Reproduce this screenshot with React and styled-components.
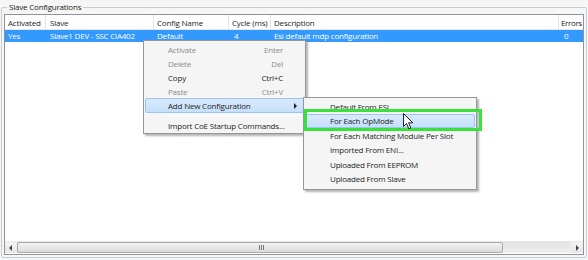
import React from "react";
import styled, { createGlobalStyle } from "styled-components";

const Global = createGlobalStyle`
  html, body { margin: 0; padding: 0; background: #f6f6f6; }
  body { font-family: "Open Sans", "Noto Sans", sans-serif; }
  * { box-sizing: border-box; }
`;

const Page = styled.div`
  position: relative;
  width: 588px;
  height: 260px;
  overflow: hidden;
  padding: 2px 1px 2px 1px;
`;

const Group = styled.fieldset`
  margin: 0;
  height: 256px;
  border: 1px solid #c8cdd2;
  border-radius: 2px;
  padding: 4px 2px 2px 2px;
  display: flex;
  flex-direction: column;
`;

const Legend = styled.legend`
  font-size: 8px;
  letter-spacing: -0.2px;
  color: #222;
  padding: 0 2px;
  margin-left: 3px;
  line-height: 10px;
`;

const ListView = styled.div`
  flex: 1;
  border: 1px solid #8f949b;
  background: #fff;
  display: flex;
  flex-direction: column;
  margin-top: -2px;
`;

const cols = "41px 108px 75px 42px 288px 1fr";

const HeaderRow = styled.div`
  display: grid;
  grid-template-columns: ${cols};
  height: 15px;
  border-bottom: 1px solid #e4e6ea;
`;

const HeaderCell = styled.div`
  font-size: 8px;
  letter-spacing: ${(p) => (p.$last ? "-0.35px" : "-0.2px")};
  color: #262626;
  line-height: 15px;
  padding-left: ${(p) => p.$pad || 3}px;
  border-right: ${(p) => (p.$last ? "none" : "1px solid #e2e4e8")};
  white-space: nowrap;
  overflow: hidden;
`;

const DataRow = styled.div`
  display: grid;
  grid-template-columns: ${cols};
  height: 12px;
  background: #3399ff;
`;

const DataCell = styled.div`
  font-size: 8px;
  letter-spacing: -0.2px;
  color: #fff;
  line-height: 12px;
  padding-left: ${(p) => p.$pad || 3}px;
  white-space: nowrap;
  overflow: hidden;
`;

const Spacer = styled.div`
  flex: 1;
`;

const HScroll = styled.div`
  height: 12px;
  display: flex;
  background: linear-gradient(#e3e3e3, #efefef);
  border-top: 1px solid #e8e8e8;
  margin-bottom: 1px;
`;

const ScrollButton = styled.div`
  width: 12px;
  display: flex;
  align-items: center;
  justify-content: center;
  background: linear-gradient(#f4f4f4, #e6e6e6);
`;

const Thumb = styled.div`
  width: 486px;
  border: 1px solid #a9a9a9;
  border-radius: 2px;
  background: linear-gradient(#f2f2f2, #dcdcdc);
  display: flex;
  align-items: center;
  justify-content: center;
`;

const Grip = styled.div`
  width: 5px;
  height: 5px;
  background: repeating-linear-gradient(90deg, #777 0 1px, transparent 1px 2px);
  margin-left: 2px;
`;

const Menu = styled.div`
  position: absolute;
  left: ${(p) => p.$x}px;
  top: ${(p) => p.$y}px;
  width: ${(p) => p.$w}px;
  background: #f5f5f5;
  border: 1px solid #979797;
  padding: ${(p) => p.$pad};
  box-shadow: 2px 2px 2px rgba(0, 0, 0, 0.3);
`;

const Item = styled.div`
  position: relative;
  height: ${(p) => p.$h}px;
  display: flex;
  align-items: center;
  padding-left: ${(p) => p.$indent}px;
  padding-right: 8px;
  font-size: 8px;
  letter-spacing: -0.2px;
  color: ${(p) => (p.$disabled ? "#8c8c8c" : "#1d1d1d")};
  border: 1px solid ${(p) => (p.$hot ? "#9cc6ee" : "transparent")};
  border-radius: 2px;
  background: ${(p) => (p.$hot ? "linear-gradient(#d8eafc, #c6e0fa)" : "transparent")};
  white-space: nowrap;
`;

const Label = styled.span`
  flex: 1;
`;

const Shortcut = styled.span`
  width: 30px;
  text-align: right;
  margin-right: 12px;
`;

const Arrow = styled.span`
  position: absolute;
  right: 6px;
  top: 4px;
  width: 0;
  height: 0;
  border-top: 3px solid transparent;
  border-bottom: 3px solid transparent;
  border-left: 3px solid #222;
`;

const Separator = styled.div`
  height: 1px;
  margin: 2px 2px 2px 22px;
  background: #d7d7d7;
  border-bottom: 1px solid #fff;
`;

const Highlight = styled.div`
  position: absolute;
  left: 304px;
  top: 109px;
  width: 178px;
  height: 22px;
  border: 3px solid #39e23a;
`;

const Cursor = styled.svg`
  position: absolute;
  left: 403px;
  top: 113px;
`;

const mainItems = [
  { label: "Activate", key: "Enter", disabled: true },
  { label: "Delete", key: "Del", disabled: true },
  { label: "Copy", key: "Ctrl+C" },
  { label: "Paste", key: "Ctrl+V", disabled: true },
];

const subItems = [
  "Default From ESI",
  "For Each OpMode",
  "For Each Matching Module Per Slot",
  "Imported From ENI...",
  "Uploaded From EEPROM",
  "Uploaded From Slave",
];

export default function App() {
  return (
    <>
      <Global />
      <Page>
        <Group>
          <Legend>Slave Configurations</Legend>
          <ListView>
            <HeaderRow>
              <HeaderCell>Activated</HeaderCell>
              <HeaderCell $pad={4}>Slave</HeaderCell>
              <HeaderCell>Config Name</HeaderCell>
              <HeaderCell>Cycle (ms)</HeaderCell>
              <HeaderCell>Description</HeaderCell>
              <HeaderCell $last $pad={2}>Errors</HeaderCell>
            </HeaderRow>
            <DataRow>
              <DataCell>Yes</DataCell>
              <DataCell $pad={4}>Slave1 DEV - SSC CiA402</DataCell>
              <DataCell>Default</DataCell>
              <DataCell $pad={5}>4</DataCell>
              <DataCell>Esi default mdp configuration</DataCell>
              <DataCell $pad={5}>0</DataCell>
            </DataRow>
            <Spacer />
            <HScroll>
              <ScrollButton>
                <svg width="4" height="6" viewBox="0 0 4 6">
                  <path d="M3 0 L0 3 L3 6 Z" fill="#444" />
                </svg>
              </ScrollButton>
              <Thumb>
                <Grip />
              </Thumb>
              <Spacer />
              <ScrollButton>
                <svg width="4" height="6" viewBox="0 0 4 6">
                  <path d="M1 0 L4 3 L1 6 Z" fill="#444" />
                </svg>
              </ScrollButton>
            </HScroll>
          </ListView>
        </Group>

        <Menu $x={143} $y={40} $w={163} $pad="1px 1px 1px 1px">
          {mainItems.map((it) => (
            <Item key={it.label} $h={14} $indent={22} $disabled={it.disabled}>
              <Label>{it.label}</Label>
              <Shortcut>{it.key}</Shortcut>
            </Item>
          ))}
          <Item $h={15} $indent={22} $hot>
            <Label>Add New Configuration</Label>
            <Arrow />
          </Item>
          <Separator />
          <Item $h={14} $indent={22}>
            <Label>Import CoE Startup Commands...</Label>
          </Item>
        </Menu>

        <Menu $x={303} $y={97} $w={174} $pad="1px 1px 3px 1px">
          {subItems.map((s, i) => (
            <Item key={s} $h={14.5} $indent={24} $hot={i === 1}>
              <Label>{s}</Label>
            </Item>
          ))}
        </Menu>

        <Highlight />

        <Cursor width="12" height="18" viewBox="0 0 12 18">
          <path
            d="M0.5 0.5 L0.5 13.5 L3.5 10.5 L5.8 15.8 L7.8 15 L5.6 9.8 L9.8 9.8 Z"
            fill="#fff"
            stroke="#222"
            strokeWidth="1"
            strokeLinejoin="round"
          />
        </Cursor>
      </Page>
    </>
  );
}
